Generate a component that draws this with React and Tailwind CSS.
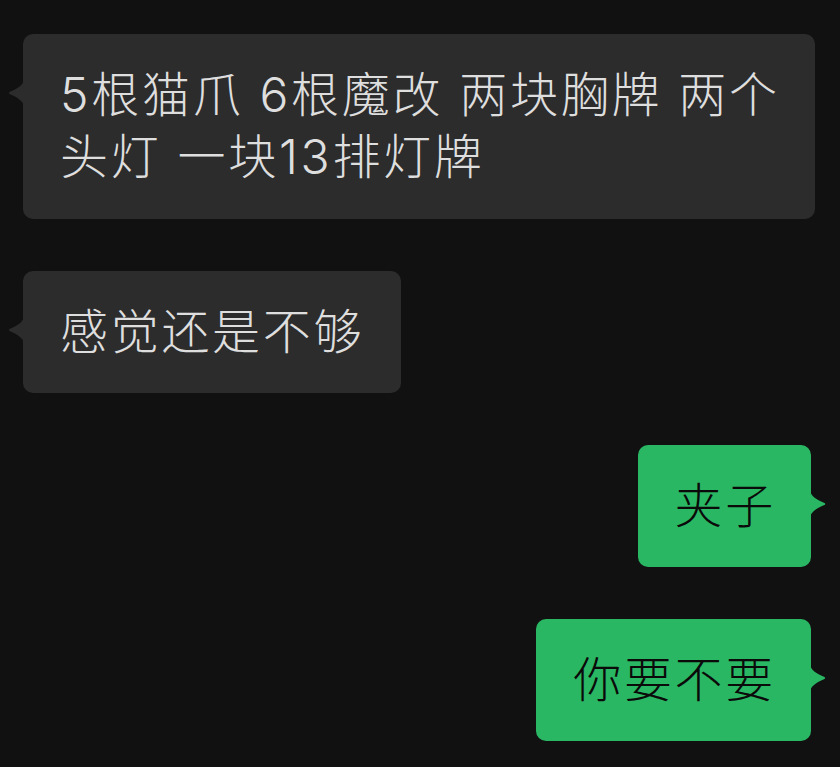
import React from 'react';

const font = { fontFamily: 'Inter, "Noto Sans CJK SC", "Noto Sans", sans-serif' };

// 气泡的小尖角
const Tail = ({ side, color }) => (
  <svg
    width="17"
    height="32"
    viewBox="0 0 17 32"
    className={`absolute top-[43px] ${side === 'left' ? '-left-[15px]' : '-right-[15px] -scale-x-100'}`}
  >
    <path d="M17 0 C16 8, 9 12, 1.5 15 Q0 16 1.5 17 C9 20, 16 24, 17 32 Z" fill={color} />
  </svg>
);

const Bubble = ({ mine, wide, lines }) => (
  <div className={`flex ${mine ? 'justify-end pr-[29px]' : 'justify-start pl-[23px]'}`}>
    <div
      className={`relative rounded-[10px] pl-[37px] pt-[30px] text-[48px] font-light leading-[62px] tracking-[2.7px] whitespace-nowrap ${
        wide ? 'w-[792px] pb-[31px]' : 'pb-[30px]'
      } ${mine ? 'pr-[35px] bg-[#2ab763] text-[#0a0a0a]' : 'pr-[37px] bg-[#2c2c2c] text-[#dedede]'}`}
      style={font}
    >
      <Tail side={mine ? 'right' : 'left'} color={mine ? '#2ab763' : '#2c2c2c'} />
      {lines.map((l, i) => (
        <div key={i} className="h-[62px]">
          {l}
        </div>
      ))}
    </div>
  </div>
);

export default function App() {
  return (
    <div className="min-h-[767px] w-[840px] bg-[#111111] pt-[34px] flex flex-col gap-[52px]">
      <Bubble wide lines={['5根猫爪 6根魔改 两块胸牌 两个', '头灯 一块13排灯牌']} />
      <Bubble lines={['感觉还是不够']} />
      <Bubble mine lines={['夹子']} />
      <Bubble mine lines={['你要不要']} />
    </div>
  );
}
